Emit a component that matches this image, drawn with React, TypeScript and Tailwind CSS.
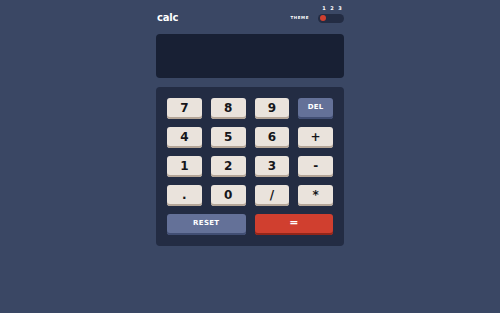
import React from "react";

const Key = ({ label, kind = "num", wide = false }: { label: string; kind?: "num" | "del" | "eq"; wide?: boolean }) => {
  const base = "h-[21px] rounded-[3px] flex items-center justify-center font-bold";
  const cls =
    kind === "num"
      ? "bg-[#eae3dc] text-[#16161a] shadow-[inset_0_-2px_0_#b4a597] text-[12px] pb-[2px]"
      : kind === "del"
      ? "bg-[#647198] text-white shadow-[inset_0_-2px_0_#414e73] text-[7px] tracking-[0.3px] pb-[2px]"
      : "bg-[#d03f2f] text-white shadow-[inset_0_-2px_0_#93261a] text-[11px] pb-[2px]";
  return <div className={`${base} ${cls} ${wide ? "col-span-2" : ""}`}>{label}</div>;
};

export default function App() {
  const rows = [
    ["7", "8", "9"],
    ["4", "5", "6"],
    ["1", "2", "3"],
    [".", "0", "/"],
  ];
  const ops = ["DEL", "+", "-", "*"];
  return (
    <div
      className="w-[500px] h-[313px] bg-[#3a4764] flex justify-center"
      style={{ fontFamily: "'DejaVu Sans', 'Liberation Sans', sans-serif" }}
    >
      <div className="w-[188px] flex flex-col">
        <div className="h-[34px] flex items-center justify-between pl-[1px]">
          <div className="text-white font-bold text-[10px] mt-[1px] tracking-[-0.2px]">calc</div>
          <div className="flex items-end gap-[9px] mt-[-6px]">
            <div className="text-white text-[4px] leading-none font-bold tracking-[0.6px] mb-[3px]">THEME</div>
            <div className="flex flex-col items-center">
              <div className="flex gap-[4px] text-white text-[5px] leading-none font-bold mb-[3px] pl-[2px]">
                <span className="w-[4px] text-center">1</span>
                <span className="w-[4px] text-center">2</span>
                <span className="w-[4px] text-center">3</span>
              </div>
              <div className="w-[26px] h-[9px] rounded-full bg-[#232c43] flex items-center px-[2px]">
                <div className="w-[6px] h-[6px] rounded-full bg-[#d03f2f]" />
              </div>
            </div>
          </div>
        </div>
        <div className="h-[44px] bg-[#182034] rounded-[4px]" />
        <div className="mt-[9px] bg-[#232c43] rounded-[4px] px-[11px] pt-[11px] pb-[11px]">
          <div className="grid grid-cols-4 gap-x-[9px] gap-y-[8px]">
            {rows.map((r, i) => (
              <React.Fragment key={i}>
                {r.map((k) => (
                  <Key key={k} label={k} />
                ))}
                <Key label={ops[i]} kind={i === 0 ? "del" : "num"} />
              </React.Fragment>
            ))}
            <Key label="RESET" kind="del" wide />
            <Key label="=" kind="eq" wide />
          </div>
        </div>
      </div>
    </div>
  );
}
